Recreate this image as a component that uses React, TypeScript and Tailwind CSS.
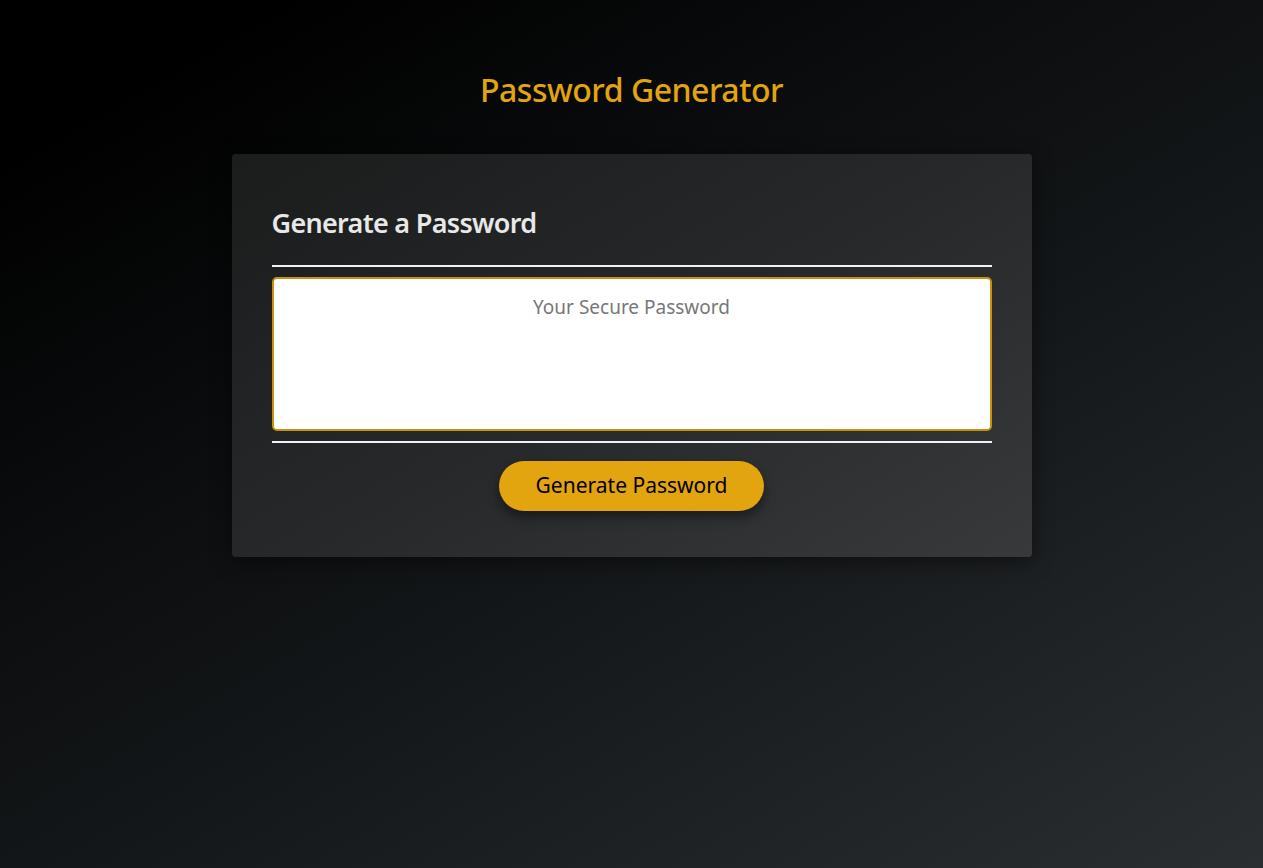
import React from "react";

const App: React.FC = () => {
  return (
    <div
      className="min-h-screen w-full bg-[linear-gradient(150deg,#000000_10%,#131618_55%,#2b2e31_100%)] flex flex-col items-center"
      style={{ fontFamily: '"Noto Sans", "Open Sans", sans-serif' }}
    >
      <h1 className="mt-[68px] text-[32px] leading-[44px] font-medium text-[#e2a40f] tracking-[-0.5px]">
        Password Generator
      </h1>
      <div className="mt-[42px] w-[800px] rounded-[4px] bg-[linear-gradient(150deg,#1b1c1c_0%,#26282a_50%,#37393b_100%)] shadow-[0_4px_20px_rgba(0,0,0,0.5)] px-10 pt-[50px] pb-[46px]">
        <h2 className="text-[27px] leading-[38px] font-semibold text-[#e8e8e8] tracking-[-0.7px]">
          Generate a Password
        </h2>
        <hr className="mt-[23px] border-0 h-[2px] bg-[#f2f2f2]" />
        <textarea
          readOnly
          placeholder="Your Secure Password"
          className="mt-[10px] block w-full h-[154px] resize-none rounded-[5px] border-2 border-[#c8900c] bg-white text-center text-[19px] leading-[28px] pt-[14px] text-[#555] placeholder:text-[#777] outline-none"
        />
        <hr className="mt-[10px] border-0 h-[2px] bg-[#f2f2f2]" />
        <div className="mt-[18px] flex justify-center">
          <button className="h-[50px] w-[265px] rounded-full bg-[#e2a40f] text-[21px] text-black shadow-[0_6px_12px_rgba(0,0,0,0.45)]">
            Generate Password
          </button>
        </div>
      </div>
    </div>
  );
};

export default App;
